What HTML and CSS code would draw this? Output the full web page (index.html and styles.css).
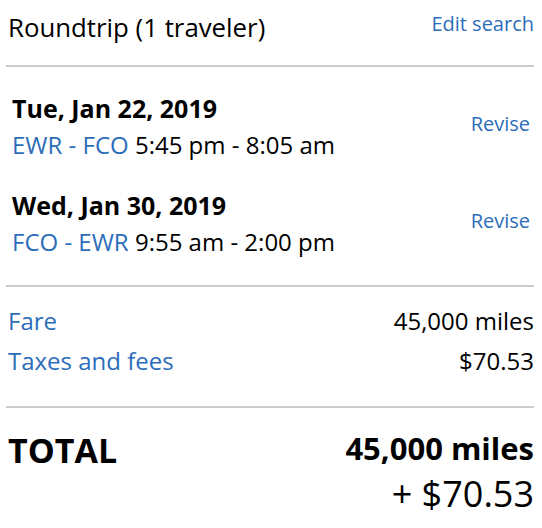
FILE: index.html
```html
<!DOCTYPE html>
<html>
<head>
<meta charset="utf-8">
<link rel="stylesheet" href="styles.css">
</head>
<body>
<div class="summary">
  <div class="header">
    <div class="title">Roundtrip (1 traveler)</div>
    <a class="link edit">Edit search</a>
  </div>
  <div class="flights">
    <div class="flight">
      <div class="info">
        <div class="date">Tue, Jan 22, 2019</div>
        <div class="route"><span class="link">EWR - FCO</span> 5:45 pm - 8:05 am</div>
      </div>
      <a class="link revise">Revise</a>
    </div>
    <div class="flight">
      <div class="info">
        <div class="date">Wed, Jan 30, 2019</div>
        <div class="route"><span class="link">FCO - EWR</span> 9:55 am - 2:00 pm</div>
      </div>
      <a class="link revise">Revise</a>
    </div>
  </div>
  <div class="costs">
    <div class="cost"><span class="link">Fare</span><span>45,000 miles</span></div>
    <div class="cost"><span class="link">Taxes and fees</span><span>$70.53</span></div>
  </div>
  <div class="total">
    <div class="total-label">TOTAL</div>
    <div class="total-amount">
      <div class="total-miles">45,000 miles</div>
      <div class="total-cash">+ $70.53</div>
    </div>
  </div>
</div>
</body>
</html>
```
FILE: styles.css
```css
html, body {
  margin: 0;
  padding: 0;
  background: #fff;
}
body {
  font-family: "Open Sans", "Liberation Sans", sans-serif;
  color: #000;
}
.summary {
  padding: 0 8px 0 6px;
}
.link {
  color: #2c6db9;
}
.header {
  display: flex;
  justify-content: space-between;
  align-items: flex-start;
  padding: 11px 0 22px 2px;
  border-bottom: 2px solid #cccccc;
}
.title {
  font-size: 25.8px;
  line-height: 32px;
}
.edit {
  font-size: 20px;
  line-height: 28px;
  margin-top: -1px;
}
.flights {
  padding: 24px 4px 23px 6px;
  border-bottom: 2px solid #cccccc;
}
.flight {
  display: flex;
  justify-content: space-between;
  align-items: flex-start;
}
.flight + .flight {
  margin-top: 23px;
}
.date {
  font-size: 25px;
  font-weight: 700;
  line-height: 34px;
}
.route {
  font-size: 24px;
  line-height: 40px;
}
.revise {
  font-size: 20px;
  line-height: 28px;
  margin-top: 19px;
}
.costs {
  padding: 14px 0 25px 2px;
  border-bottom: 2px solid #cccccc;
}
.cost {
  display: flex;
  justify-content: space-between;
  font-size: 24px;
  line-height: 40px;
}
.total {
  display: flex;
  justify-content: space-between;
  align-items: flex-start;
  padding: 20px 0 0 2px;
}
.total-label {
  font-size: 34px;
  font-weight: 700;
  line-height: 44px;
}
.total-amount {
  text-align: right;
  margin-top: -2px;
}
.total-miles {
  font-size: 31px;
  font-weight: 700;
  line-height: 44px;
}
.total-cash {
  font-size: 36px;
  line-height: 48px;
}
```
